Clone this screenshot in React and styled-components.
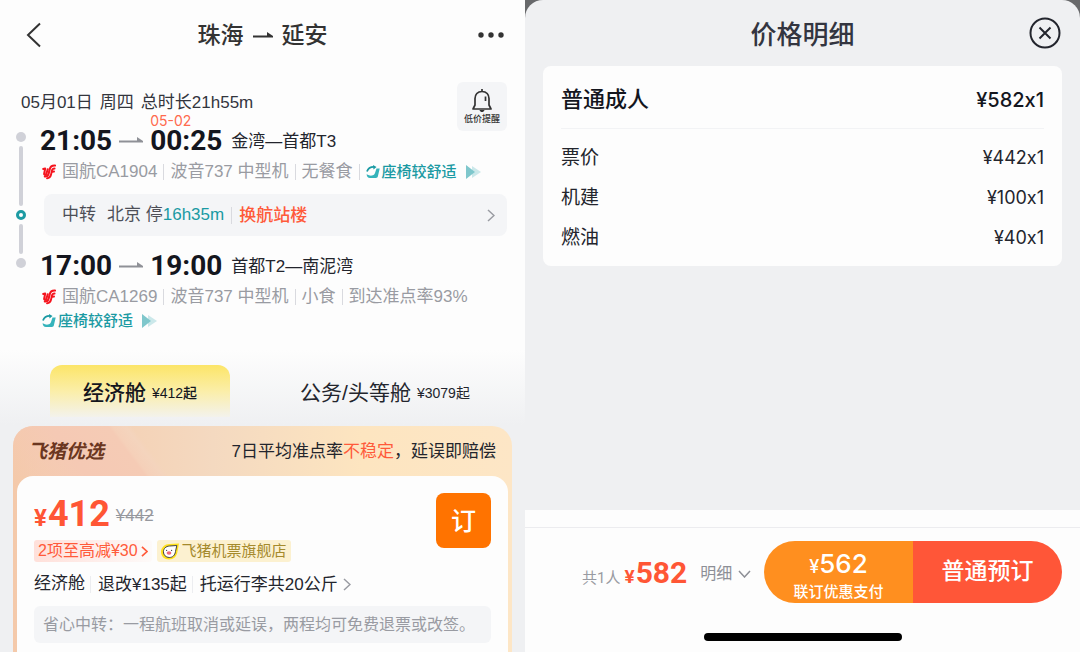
import styled, { createGlobalStyle, css } from "styled-components"

const GlobalStyle = createGlobalStyle`
    * {
        box-sizing: border-box;
    }
    body {
        margin: 0;
        color: #23252d;
        font-family: "Liberation Sans", "Noto Sans CJK SC", sans-serif;
        font-size: 17px;
        line-height: 24px;
    }
    button {
        padding: 0;
        border: none;
        background: none;
        color: inherit;
        font: inherit;
        cursor: pointer;
    }
    h1, h2, p {
        margin: 0;
        font-weight: 500;
    }
    svg {
        display: block;
        flex: none;
    }
`
const Page = styled.main`
    display: grid;
    grid-template-columns: 525fr 555fr;
    height: 100vh;
    white-space: nowrap;
`

/* Flight page */
const Flight = styled.section`
    display: flex;
    flex-direction: column;
    overflow: hidden;
    background: linear-gradient(#fdfdfd 350px, #eff0f2 425px);
`
const TopBar = styled.header`
    display: grid;
    grid-template-columns: 30px 1fr 30px;
    align-items: center;
    height: 70px;
    padding: 0 18px;
`
const Back = styled.button`
    padding-left: 6px;
`
const Route = styled.h1`
    display: flex;
    align-items: center;
    justify-content: center;
    gap: 9px;
    font-size: 23px;
    line-height: 32px;
    color: #333;
`
const Trip = styled.div`
    padding: 12px 18px 0 16px;
`
const TripHead = styled.div`
    display: flex;
    justify-content: space-between;
    align-items: flex-start;
    height: 43px;
`
const TripDate = styled.p`
    display: flex;
    gap: 7px;
    padding: 9px 0 0 5px;
    font-weight: 400;
    color: #33353d;
`
const Alert = styled.button`
    display: flex;
    flex-direction: column;
    align-items: center;
    width: 50px;
    padding: 6px 0 5px;
    border-radius: 6px;
    background: #f4f5f7;
    font-size: 9px;
    line-height: 13px;
    font-weight: 500;
    color: #333;
`
const Itinerary = styled.div`
    display: grid;
    grid-template-columns: 10px 1fr;
    column-gap: 14px;
`
const Timeline = styled.div`
    display: flex;
    flex-direction: column;
    align-items: center;
    gap: 4px;
    height: 136px;
    margin-top: 7px;
`
const Stop = styled.span`
    width: 10px;
    height: 10px;
    border-radius: 50%;
    background: #d0d1d8;
    ${({ $transfer }) => $transfer && css`
        border: solid 3px #1d9ba3;
        background: white;
    `}
`
const Track = styled.span`
    flex: ${({ $size }) => $size};
    width: 4px;
    border-radius: 2px;
    background: #d0d1d8;
`
const Times = styled.div`
    display: flex;
    align-items: center;
    gap: 7px;
    height: 30px;
`
const Time = styled.time`
    position: relative;
    padding-top: 1px;
    font-family: Roboto, sans-serif;
    font-size: 28px;
    line-height: 22px;
    font-weight: 700;
    color: #14161e;
`
const NextDay = styled.span`
    position: absolute;
    left: 0;
    top: -15px;
    font-family: Inter, sans-serif;
    font-size: 14px;
    line-height: 14px;
    font-weight: 400;
    color: #ff6a4d;
`
const Airports = styled.span`
    padding: 3px 0 0 2px;
`
const Facts = styled.div`
    display: flex;
    flex-wrap: wrap;
    align-items: center;
    margin-top: 5px;
    padding-left: 2px;
    color: #999ba2;
`
const Fact = styled.span`
    display: flex;
    align-items: center;
    gap: 6px;
    line-height: 24px;
    &:not(:last-child)::after {
        content: "";
        width: 1px;
        height: 16px;
        margin-right: 6px;
        background: ${({ $open }) => ($open ? "transparent" : "#d9dadf")};
    }
`
const Seat = styled.span`
    display: flex;
    align-items: center;
    gap: 1px;
    font-size: 15px;
    line-height: 24px;
    font-weight: 500;
    color: #1a9aa3;
`
const Transfer = styled.button`
    display: flex;
    align-items: center;
    width: calc(100% - 4px);
    height: 42px;
    margin: 10px 0 14px 4px;
    padding: 0 12px 0 18px;
    border-radius: 8px;
    background: #f4f5f7;
    color: #4d4f57;
    svg {
        margin-left: auto;
    }
`
const City = styled.span`
    margin-left: 11px;
    margin-right: 7px;
    em {
        font-style: normal;
        color: #1a9aa3;
    }
`
const Change = styled.strong`
    padding-left: 7px;
    border-left: solid 1px #d9dadf;
    line-height: 17px;
    font-weight: 500;
    color: #ff5a3a;
`
const Cabins = styled.div`
    display: flex;
    justify-content: space-between;
    margin: 32px 50px 9px;
`
const Cabin = styled.button`
    display: flex;
    align-items: center;
    justify-content: center;
    gap: 6px;
    width: 180px;
    height: 52px;
    padding-top: 4px;
    border-radius: 12px 12px 0 0;
    font-size: 21px;
    small {
        font-size: 14px;
    }
    ${({ $active }) => $active && css`
        background: linear-gradient(#fce568, #fbeea8 50%, #f3f2ec);
        font-weight: 500;
        color: #14161e;
    `}
`
const Offer = styled.article`
    display: flex;
    flex: 1;
    flex-direction: column;
    margin: 0 13px;
    padding: 0 4px;
    border-radius: 20px 20px 0 0;
    background: linear-gradient(to right, #f4c9aa, #f4d9c0 40%, #fde5c0 70%, #fde6c6);
`
const OfferHead = styled.header`
    display: flex;
    justify-content: space-between;
    align-items: center;
    height: 50px;
    margin: 0 -4px;
    padding: 2px 16px 0 15px;
    border-radius: 20px 0 0 0;
    background: linear-gradient(53deg, #f5c9b200 0, #f5c9b4 60px, #f5cbb5 106px, #f5d0b9 109px, #f4d4bd 120px, #f4d6be00 125px);
`
const Brand = styled.h2`
    font-size: 19px;
    font-style: italic;
    font-weight: 700;
    color: #6b3620;
`
const Punctuality = styled.p`
    font-weight: 400;
    em {
        font-style: normal;
        color: #ff5a3a;
    }
`
const OfferBody = styled.div`
    flex: 1;
    padding: 17px 17px 0;
    border-radius: 16px 16px 0 0;
    background: #fdfdfd;
`
const OfferMain = styled.div`
    display: flex;
    justify-content: space-between;
    align-items: flex-start;
    height: 69px;
`
const Price = styled.div`
    display: flex;
    align-items: baseline;
    font-family: Roboto, sans-serif;
    font-size: 36px;
    line-height: 42px;
    font-weight: 700;
    color: #ff5635;
    small {
        margin-right: 1px;
        font-size: 24px;
    }
    del {
        align-self: center;
        margin-left: 6px;
        font-family: "Liberation Sans", sans-serif;
        font-size: 17px;
        font-weight: 400;
        color: #96989e;
    }
`
const Tags = styled.div`
    display: flex;
    gap: 5px;
    margin-top: 1px;
`
const Tag = styled.button`
    display: flex;
    align-items: center;
    gap: 3px;
    height: 22px;
    padding: 0 4px;
    border-radius: 3px;
    line-height: 22px;
    font-size: ${({ $shop }) => ($shop ? 15 : 16)}px;
    color: ${({ $shop }) => ($shop ? "#a58a2c" : "#ff5a3a")};
    background: ${({ $shop }) => ($shop ? "#fcf1d0" : "linear-gradient(to right, #ffe0da, #fdfaf9)")};
`
const Book = styled.button`
    width: 55px;
    height: 55px;
    border-radius: 8px;
    background: #ff7300;
    font-size: 25px;
    font-weight: 500;
    color: white;
`
const Rules = styled.button`
    display: flex;
    align-items: center;
    margin-top: 10px;
    line-height: 24px;
    span + span {
        margin-left: 5px;
        padding-left: 7px;
        border-left: solid 1px #ecedf0;
        line-height: 17px;
    }
    svg {
        margin-left: 5px;
    }
`
const Note = styled.p`
    margin-top: 10px;
    padding: 1px 9px 0;
    border-radius: 6px;
    background: #f4f5f7;
    font-size: 16px;
    line-height: 36px;
    font-weight: 400;
    color: #999ba2;
`

/* Price sheet */
const Backdrop = styled.section`
    display: flex;
    background: #68696b;
`
const Sheet = styled.div`
    display: flex;
    flex: 1;
    flex-direction: column;
    overflow: hidden;
    border-radius: 18px 18px 0 0;
    background: #eff0f2;
`
const SheetHead = styled.header`
    display: grid;
    grid-template-columns: 32px 1fr 32px;
    align-items: center;
    height: 66px;
    padding: 0 19px;
`
const SheetTitle = styled.h2`
    grid-column: 2;
    padding-top: 3px;
    text-align: center;
    font-size: 26px;
    line-height: 36px;
    color: #333540;
`
const PriceCard = styled.div`
    margin: 0 18px;
    padding: 0 18px 9px;
    border-radius: 8px;
    background: #fdfdfd;
`
const PriceTable = styled.table`
    width: 100%;
    border-collapse: collapse;
    th, td {
        height: 40px;
        padding: 2px 0 0;
        text-align: left;
        font-size: 19px;
        font-weight: 400;
    }
    td {
        text-align: right;
        font-family: Inter, sans-serif;
        font-size: 18px;
        font-feature-settings: "calt" 0;
    }
    thead th, thead td {
        height: 62px;
        padding-top: 6px;
        border-bottom: solid 1px #f2f3f5;
        font-size: 22px;
        font-weight: 500;
        color: #14161e;
    }
    thead td {
        font-size: 20px;
    }
    tbody::before {
        content: "";
        display: block;
        height: 8px;
    }
`
const Footer = styled.footer`
    margin-top: auto;
    padding: 17px 0 11px;
    background: #fdfdfd;
`
const PayRow = styled.div`
    display: flex;
    align-items: center;
    justify-content: space-between;
    padding: 13px 18px 30px 57px;
    border-top: solid 1px #ececef;
`
const Total = styled.p`
    display: flex;
    align-items: baseline;
    padding-top: 6px;
    font-family: Roboto, "Noto Sans CJK SC", sans-serif;
    font-size: 30px;
    line-height: 34px;
    font-weight: 700;
    color: #ff5635;
    span {
        margin-right: 4px;
        font-size: 15px;
        font-weight: 400;
        color: #999ba2;
    }
    small {
        margin-right: 1px;
        font-size: 19px;
    }
`
const Details = styled.button`
    display: flex;
    align-items: center;
    gap: 6px;
    padding-top: 3px;
    font-size: 16px;
    color: #8d8f96;
`
const PayButtons = styled.div`
    display: flex;
    overflow: hidden;
    border-radius: 31px;
`
const Pay = styled.button`
    display: flex;
    flex-direction: column;
    align-items: center;
    justify-content: center;
    width: 149px;
    height: 62px;
    padding: ${({ $deal }) => ($deal ? "10px 0 0" : "0 0 3px")};
    background: ${({ $deal }) => ($deal ? "#ff8f1f" : "#ff5638")};
    font-size: 23px;
    line-height: 26px;
    font-weight: 500;
    color: white;
    b {
        font-family: Inter, sans-serif;
        font-size: 26px;
        font-weight: 500;
    }
    i {
        font-size: 18px;
        font-style: normal;
    }
    small {
        font-size: 15px;
        line-height: 24px;
    }
`
const HomeBar = styled.div`
    width: 198px;
    height: 8px;
    margin: 0 auto;
    border-radius: 4px;
    background: black;
`

function Chevron({ width = 8, height = 13, color = "#999ba2", stroke = 1.5 }) {
    return (
        <svg width={width} height={height} viewBox="0 0 8 13" fill="none" stroke={color} strokeWidth={stroke}>
            <path d="M1 1l6 5.5L1 12" />
        </svg>
    )
}

function HalfArrow({ width, color }) {
    return (
        <svg width={width} height="8" viewBox={`0 0 ${width} 8`}>
            <path d={`M0 4.500H${width - 6}V1L${width} 5v1.500H0z`} fill={color} />
        </svg>
    )
}

function AirlineLogo() {
    return (
        <svg width="14" height="16" viewBox="0 0 14 16" fill="none" stroke="#f5141e" strokeLinecap="round" strokeLinejoin="round">
            <path d="M1.200 5l2-.5-1 5c-.4 1.900 1.700 1.900 2.200.3l1.300-4.500" strokeWidth="2" />
            <path d="M13 1.500C9.500 1.300 8.300 2.800 7.800 5L6.600 9.800c-.5 2-1.700 2.900-3.800 2.700" strokeWidth="2.100" />
            <path d="M12.600 4.500c-1.600 0-2.300.6-2.600 1.900L9 10.800c-.5 2-1.800 3.200-4 3.600" strokeWidth="1.900" />
            <path d="M12 7.600l-1.800.2" strokeWidth="2" />
        </svg>
    )
}

function SeatTag() {
    return (
        <Seat>
            <svg width="15" height="14" viewBox="0 0 15 14">
                <path d="M1 6.500C2 3.500 4.500 1.700 8 1.800" fill="none" stroke="#1a9aa3" strokeWidth="1.800" />
                <path d="M7 0l3.500 2L7.500 4.500z" fill="#1a9aa3" />
                <path d="M10.500 3.500h3.200l-1.800 7.800c-.2 1.200-.9 1.700-2 1.700H4C1.800 13 .8 11.500.6 9.300c2 1 3.500 1.500 5.200 1.300 1.800-.2 2.700-1 3.200-2.600z" fill="#35b3bb" />
            </svg>
            座椅较舒适
            <svg width="23" height="14" viewBox="0 0 23 14">
                <path d="M14 1l9 6-9 6z" fill="#cbe8ea" />
                <path d="M8 0l9 7-9 7z" fill="#7fc7cc" />
            </svg>
        </Seat>
    )
}

function Leg({ depart, arrive, nextDay, airports, flight, facts }) {
    return (
        <div>
            <Times>
                <Time>{depart}</Time>
                <HalfArrow width={24} color="#8f9197" />
                <Time>
                    {nextDay && <NextDay>{nextDay}</NextDay>}
                    {arrive}
                </Time>
                <Airports>{airports}</Airports>
            </Times>
            <Facts>
                <Fact>
                    <AirlineLogo />
                    {flight}
                </Fact>
                {facts.map((fact, index) => (
                    <Fact key={fact} $open={index === 2}>{fact}</Fact>
                ))}
                <SeatTag />
            </Facts>
        </div>
    )
}

const fees = [
    { name: "票价", amount: "¥442x1" },
    { name: "机建", amount: "¥100x1" },
    { name: "燃油", amount: "¥40x1" },
]

function FlightPage() {
    return (
        <Flight>
            <TopBar>
                <Back aria-label="返回">
                    <svg width="18" height="26" viewBox="0 0 18 26" fill="none" stroke="#333" strokeWidth="2">
                        <path d="M16 1.500L4 13l12 11.500" />
                    </svg>
                </Back>
                <Route>
                    珠海
                    <HalfArrow width={20} color="#333" />
                    延安
                </Route>
                <button aria-label="更多">
                    <svg width="28" height="6" viewBox="0 0 28 6" fill="#333">
                        <circle cx="4" cy="3" r="2.700" />
                        <circle cx="14" cy="3" r="2.700" />
                        <circle cx="24" cy="3" r="2.700" />
                    </svg>
                </button>
            </TopBar>
            <Trip>
                <TripHead>
                    <TripDate>
                        <span>05月01日</span>
                        <span>周四</span>
                        <span>总时长21h55m</span>
                    </TripDate>
                    <Alert>
                        <svg width="22" height="25" viewBox="0 0 22 25" fill="none" stroke="#333" strokeWidth="1.700">
                            <path d="M11 1v3M11 3.500c-4.500 0-7 3-7 7v6.500L2 21h18l-2-4v-6.500c0-4-2.500-7-7-7z" strokeLinejoin="round" />
                            <path d="M14.500 8.500v4.500" />
                            <path d="M8.500 22h5c-.5 1.500-1.300 2-2.500 2s-2-.5-2.500-2z" fill="#333" stroke="none" />
                        </svg>
                        低价提醒
                    </Alert>
                </TripHead>
                <Itinerary>
                    <Timeline>
                        <Stop />
                        <Track $size={2} />
                        <Stop $transfer />
                        <Track $size={1} />
                        <Stop />
                    </Timeline>
                    <div>
                        <Leg
                            depart="21:05"
                            arrive="00:25"
                            nextDay="05-02"
                            airports="金湾—首都T3"
                            flight="国航CA1904"
                            facts={["波音737 中型机", "无餐食"]}
                        />
                        <Transfer>
                            中转
                            <City>北京 停<em>16h35m</em></City>
                            <Change>换航站楼</Change>
                            <Chevron />
                        </Transfer>
                        <Leg
                            depart="17:00"
                            arrive="19:00"
                            airports="首都T2—南泥湾"
                            flight="国航CA1269"
                            facts={["波音737 中型机", "小食", "到达准点率93%"]}
                        />
                    </div>
                </Itinerary>
            </Trip>
            <Cabins>
                <Cabin $active>经济舱<small>¥412起</small></Cabin>
                <Cabin>公务/头等舱<small>¥3079起</small></Cabin>
            </Cabins>
            <Offer>
                <OfferHead>
                    <Brand>飞猪优选</Brand>
                    <Punctuality>7日平均准点率<em>不稳定</em>，延误即赔偿</Punctuality>
                </OfferHead>
                <OfferBody>
                    <OfferMain>
                        <div>
                            <Price><small>¥</small>412<del>¥442</del></Price>
                            <Tags>
                                <Tag>2项至高减¥30<Chevron width={7} height={11} color="#ff5a3a" stroke={2} /></Tag>
                                <Tag $shop>
                                    <svg width="18" height="17" viewBox="0 0 18 17">
                                        <path d="M18 .5l-1.500 8c-.6 5-4 8-8.500 8S0 13.500 0 9s4-8 8.500-8z" fill="#ffe01a" />
                                        <path d="M15.800 2.500l-1.300 6c-.6 4-3 6-6.300 6S2.400 12 2.400 8.800 5 3.200 8.500 3z" fill="#fff" stroke="#444" strokeWidth="1" />
                                        <ellipse cx="8" cy="10" rx="2.400" ry="1.800" fill="#f0687c" />
                                        <circle cx="5.600" cy="7.400" r=".6" fill="#444" />
                                        <circle cx="10.600" cy="7.400" r=".6" fill="#444" />
                                    </svg>
                                    飞猪机票旗舰店
                                </Tag>
                            </Tags>
                        </div>
                        <Book>订</Book>
                    </OfferMain>
                    <Rules>
                        <span>经济舱</span>
                        <span>退改¥135起</span>
                        <span>托运行李共20公斤</span>
                        <Chevron />
                    </Rules>
                    <Note>省心中转：一程航班取消或延误，两程均可免费退票或改签。</Note>
                </OfferBody>
            </Offer>
        </Flight>
    )
}

function PriceSheet() {
    return (
        <Backdrop>
            <Sheet>
                <SheetHead>
                    <SheetTitle>价格明细</SheetTitle>
                    <button aria-label="关闭">
                        <svg width="32" height="32" viewBox="0 0 32 32" fill="none" stroke="#23252d" strokeWidth="2">
                            <circle cx="16" cy="16" r="14.500" />
                            <path d="M10.500 10.500l11 11M21.500 10.500l-11 11" />
                        </svg>
                    </button>
                </SheetHead>
                <PriceCard>
                    <PriceTable>
                        <thead>
                            <tr>
                                <th scope="row">普通成人</th>
                                <td>¥582x1</td>
                            </tr>
                        </thead>
                        <tbody>
                            {fees.map((fee) => (
                                <tr key={fee.name}>
                                    <th scope="row">{fee.name}</th>
                                    <td>{fee.amount}</td>
                                </tr>
                            ))}
                        </tbody>
                    </PriceTable>
                </PriceCard>
                <Footer>
                    <PayRow>
                        <Total><span>共1人</span><small>¥</small>582</Total>
                        <Details>
                            明细
                            <svg width="13" height="8" viewBox="0 0 13 8" fill="none" stroke="#8d8f96" strokeWidth="1.500">
                                <path d="M1 1l5.500 6L12 1" />
                            </svg>
                        </Details>
                        <PayButtons>
                            <Pay $deal>
                                <b><i>¥</i>562</b>
                                <small>联订优惠支付</small>
                            </Pay>
                            <Pay>普通预订</Pay>
                        </PayButtons>
                    </PayRow>
                    <HomeBar />
                </Footer>
            </Sheet>
        </Backdrop>
    )
}

function App() {
    return (
        <Page>
            <GlobalStyle />
            <FlightPage />
            <PriceSheet />
        </Page>
    )
}

export default App
